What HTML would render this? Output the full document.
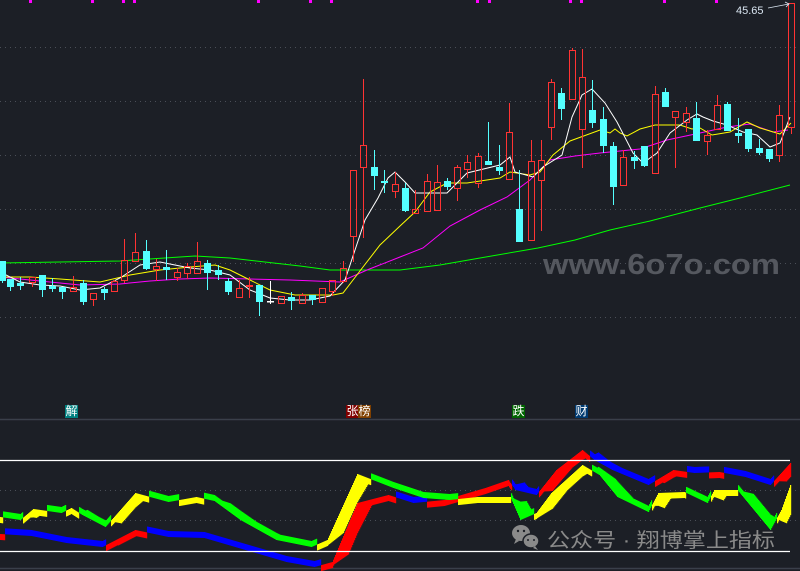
<!DOCTYPE html>
<html><head><meta charset="utf-8">
<style>
html,body{margin:0;padding:0;background:#1c1f26;}
body{width:800px;height:571px;overflow:hidden;position:relative;font-family:"Liberation Sans","Noto Sans CJK SC",sans-serif;}
svg{position:absolute;left:0;top:0;}
.lab{position:absolute;top:405px;height:13px;width:13px;color:#fff;font-size:12px;line-height:13px;text-align:center;font-family:"Liberation Sans","Noto Sans CJK SC",sans-serif;}
</style></head><body>
<svg id="s" width="800" height="571" xmlns="http://www.w3.org/2000/svg">
<g stroke="#4a4e57" stroke-width="1" stroke-dasharray="1,4">
<line x1="0" y1="47.5" x2="800" y2="47.5"/><line x1="0" y1="101.5" x2="800" y2="101.5"/>
<line x1="0" y1="155.5" x2="800" y2="155.5"/><line x1="0" y1="209.5" x2="800" y2="209.5"/>
<line x1="0" y1="263.5" x2="800" y2="263.5"/><line x1="0" y1="317.5" x2="800" y2="317.5"/>
<line x1="0" y1="490.5" x2="800" y2="490.5"/><line x1="0" y1="520.5" x2="800" y2="520.5"/>
</g>
<line x1="0" y1="419.5" x2="800" y2="419.5" stroke="#3a3f4a" stroke-width="1.5"/>
<line x1="0" y1="568.5" x2="800" y2="568.5" stroke="#3a3f4a" stroke-width="1.5"/>
<text x="543" y="274" font-family="Liberation Sans, sans-serif" font-weight="bold" font-size="29" fill="#55585f" textLength="237" lengthAdjust="spacingAndGlyphs">www.6o7o.com</text>
<g id="ma"></g><g id="cd"></g><g id="bd"></g>
<line x1="0" y1="460.5" x2="790" y2="460.5" stroke="#fff" stroke-width="1.3"/>
<line x1="0" y1="551.5" x2="790" y2="551.5" stroke="#fff" stroke-width="1.3"/>
<text x="736" y="14" font-size="11" fill="#d8e4f0" font-family="Liberation Sans, sans-serif">45.65</text>
<path d="M768 8 L789 4 M785 2 L789 4 L786 7" stroke="#d8e4f0" stroke-width="0.8" fill="none"/>
<g fill="#ff00ff">
<rect x="29" y="0" width="3" height="3"/><rect x="91" y="0" width="3" height="3"/><rect x="122" y="0" width="3" height="3"/><rect x="133" y="0" width="3" height="3"/><rect x="257" y="0" width="3" height="3"/><rect x="309" y="0" width="3" height="3"/><rect x="330" y="0" width="3" height="3"/><rect x="476" y="0" width="3" height="3"/><rect x="488" y="0" width="3" height="3"/><rect x="569" y="0" width="3" height="3"/><rect x="580" y="0" width="3" height="3"/><rect x="663" y="0" width="3" height="3"/><rect x="715" y="0" width="3" height="3"/>
</g>
<g fill="#8a8a8a">
<ellipse cx="521" cy="533" rx="9" ry="8"/><ellipse cx="531" cy="541" rx="8" ry="7" stroke="#1c1f26" stroke-width="1.5"/>
<path d="M516 539 l-2 5 l5 -3z M535 546 l3 4 l-5 -2z"/>
</g>
<g fill="#1c1f26"><circle cx="518" cy="531" r="1.2"/><circle cx="524" cy="531" r="1.2"/><circle cx="528" cy="540" r="1"/><circle cx="534" cy="540" r="1"/></g>
<text x="547" y="547" font-size="20" fill="#8a8a8a" font-family="Liberation Sans, Noto Sans CJK SC, sans-serif" textLength="228" lengthAdjust="spacingAndGlyphs">公众号 · 翔博掌上指标</text>
</svg>
<div class="lab" style="left:65px;background:#008080">解</div>
<div class="lab" style="left:346px;background:#800000">张</div>
<div class="lab" style="left:358px;background:#804000">榜</div>
<div class="lab" style="left:512px;background:#006400">跌</div>
<div class="lab" style="left:575px;background:#003a70">财</div>
<script>
var NS="http://www.w3.org/2000/svg";
function el(p,t,a){var e=document.createElementNS(NS,t);for(var k in a)e.setAttribute(k,a[k]);p.appendChild(e);return e;}
var ma=document.getElementById('ma'),cd=document.getElementById('cd'),bd=document.getElementById('bd');
function pl(pts,c){el(ma,'polyline',{points:pts.map(function(p){return p.join(',')}).join(' '),fill:'none',stroke:c,'stroke-width':1});}
pl([[0,263],[60,262],[120,261],[195,256],[230,258],[300,266],[330,270],[400,270],[440,265],[480,258],[538,248],[575,240],[610,230],[650,221],[700,208],[740,198],[790,185]],'#00ff00');
pl([[0,277],[40,281],[80,285],[120,284],[150,281],[180,279],[210,278],[250,279],[290,280],[340,282],[367,270],[400,257],[423,248],[450,226],[480,210],[507,197],[530,180],[550,160],[575,156],[600,153],[640,149],[667,140],[700,133],[727,127],[750,124],[773,132],[788,130]],'#ff00ff');
pl([[0,277],[30,277],[60,279],[100,282],[130,275],[160,270],[190,267],[215,265],[230,270],[250,280],[270,290],[295,295],[333,295],[343,293],[363,267],[380,245],[400,226],[415,212],[430,192],[447,183],[467,183],[500,178],[510,172],[530,175],[540,172],[553,155],[570,141],[600,130],[610,133],[615,129],[620,133],[627,136],[640,129],[655,125],[680,125],[692,129],[700,128],[712,135],[730,132],[747,122],[760,128],[780,134],[791,123]],'#ffff00');
pl([[0,272],[20,282],[40,285],[60,286],[80,290],[100,288],[120,278],[140,265],[160,262],[175,265],[190,268],[210,270],[230,275],[250,290],[270,298],[290,300],[310,300],[330,296],[345,280],[355,250],[365,220],[378,198],[388,178],[395,172],[405,182],[415,193],[447,193],[467,173],[500,165],[510,157],[515,172],[533,177],[543,167],[562,155],[572,117],[582,95],[592,89],[605,103],[617,122],[633,153],[643,163],[657,153],[670,133],[687,120],[697,114],[703,117],[713,121],[727,125],[743,132],[757,135],[770,147],[780,143],[790,117]],'#ffffff');
var C=[
[2,261,281,261,283,'c'],[10,279,287,279,291,'c'],[20,283,286,277,290,'c'],[32,277,282,277,287,'r'],[42,275,290,275,297,'c'],[52,286,289,278,292,'c'],[62,287,292,287,299,'c'],[73,287,291,276,292,'r'],[83,283,302,280,305,'c'],[93,293,299,293,306,'r'],[104,289,293,287,300,'c'],[114,281,291,280,292,'r'],[124,260,280,239,283,'r'],[135,252,261,233,261,'r'],[146,251,269,240,270,'c'],[156,266,269,259,281,'r'],[166,267,270,250,280,'c'],[177,272,277,268,281,'r'],[187,266,273,263,279,'r'],[197,261,273,242,273,'r'],[207,263,273,260,290,'c'],[218,270,275,265,280,'c'],[228,281,292,278,295,'c'],[239,288,297,280,298,'r'],[249,285,286,277,298,'r'],[259,285,302,285,316,'c'],[270,301,302,281,304,'w'],[281,296,303,296,304,'r'],[291,297,301,292,310,'c'],[302,295,303,293,304,'r'],[312,295,300,295,305,'c'],[322,288,302,288,303,'r'],[332,280,291,280,296,'r'],[343,268,281,261,283,'r'],[353,170,236,170,262,'r'],[363,145,167,79,238,'r'],[374,167,176,150,190,'c'],[384,181,183,170,193,'c'],[395,184,191,172,198,'r'],[405,188,211,183,212,'c'],[415,209,213,190,213,'r'],[427,181,211,174,211,'r'],[437,182,210,165,210,'r'],[447,181,187,178,190,'c'],[457,167,188,165,201,'r'],[467,162,169,155,178,'r'],[478,156,183,153,188,'r'],[488,161,165,122,165,'c'],[499,167,171,145,175,'c'],[509,132,179,103,180,'r'],[519,209,242,170,242,'c'],[531,161,240,140,240,'r'],[541,160,180,140,231,'r'],[551,82,127,79,140,'r'],[561,93,109,88,120,'c'],[572,50,99,48,100,'r'],[582,77,129,49,168,'r'],[592,110,123,80,128,'c'],[603,119,146,107,153,'c'],[613,146,187,142,205,'c'],[623,157,185,150,185,'r'],[634,157,161,151,169,'c'],[644,146,166,146,167,'c'],[655,94,173,86,173,'r'],[665,92,107,88,107,'c'],[675,111,117,111,168,'r'],[686,113,122,107,132,'r'],[696,118,141,102,141,'c'],[707,135,141,130,155,'r'],[717,105,129,95,129,'r'],[727,104,131,102,131,'c'],[738,133,136,118,143,'c'],[748,129,149,129,152,'c'],[759,148,153,139,155,'c'],[769,149,159,149,162,'c'],[779,115,155,105,162,'r'],[791,3,127,3,134,'r']];
C.forEach(function(k){var x=k[0],t=k[1],b=k[2],h=k[3],l=k[4],c=k[5];
var col=c=='r'?'#ff3333':(c=='c'?'#54ffff':'#ffffff');
if(c=='r'){el(cd,'line',{x1:x+.5,y1:h,x2:x+.5,y2:t,stroke:col});el(cd,'line',{x1:x+.5,y1:b,x2:x+.5,y2:l,stroke:col});
el(cd,'rect',{x:x-2.5,y:t+.5,width:6,height:Math.max(b-t,1),fill:'none',stroke:col,'stroke-width':1});}
else{el(cd,'line',{x1:x+.5,y1:h,x2:x+.5,y2:l,stroke:col});el(cd,'rect',{x:x-3,y:t,width:7,height:Math.max(b-t,1.5),fill:col});}
});
function interp(P){var a=[];for(var x=0;x<=790;x++){for(var i=0;i<P.length-1;i++){if(x>=P[i][0]&&x<=P[i+1][0]){var f=(x-P[i][0])/((P[i+1][0]-P[i][0])||1);a[x]=P[i][1]+f*(P[i+1][1]-P[i][1]);break;}}if(a[x]===undefined)a[x]=P[P.length-1][1];}return a;}
function band(P,up,dn,lag,mn){var a=interp(P);var last=true;for(var x=0;x<=790;x++){var y0=a[x],y1=a[Math.max(0,x-lag)];var d=y1-y0;var rising=Math.abs(d)<0.3?last:(d>0);last=rising;var h=Math.max(Math.abs(d)*0.8,mn);var top=rising?y0:y0-h;el(bd,'rect',{x:x,y:top,width:1.2,height:h,fill:rising?up:dn});}}
band([[0,534],[31,536],[66,543],[102,547],[135,530],[168,537],[204,538],[245,550],[286,562],[314,567],[332,562],[357,503],[388,495],[413,503],[444,500],[485,488],[508,480],[515,490],[536,495],[556,470],[582,450],[594,460],[612,470],[648,485],[673,470],[694,473],[719,472],[745,477],[770,485],[790,463]],'#ff0000','#0000ff',16,6);
band([[0,517],[20,520],[33,509],[61,513],[71,508],[82,515],[105,527],[135,493],[168,502],[196,497],[214,501],[240,520],[276,540],[311,547],[327,540],[357,474],[393,488],[423,498],[449,500],[477,497],[510,497],[520,520],[536,513],[551,493],[582,465],[599,475],[617,497],[648,512],[658,493],[684,492],[707,503],[714,490],[737,490],[770,530],[781,510],[790,485]],'#ffff00','#00ff00',16,6);
</script>
</body></html>
